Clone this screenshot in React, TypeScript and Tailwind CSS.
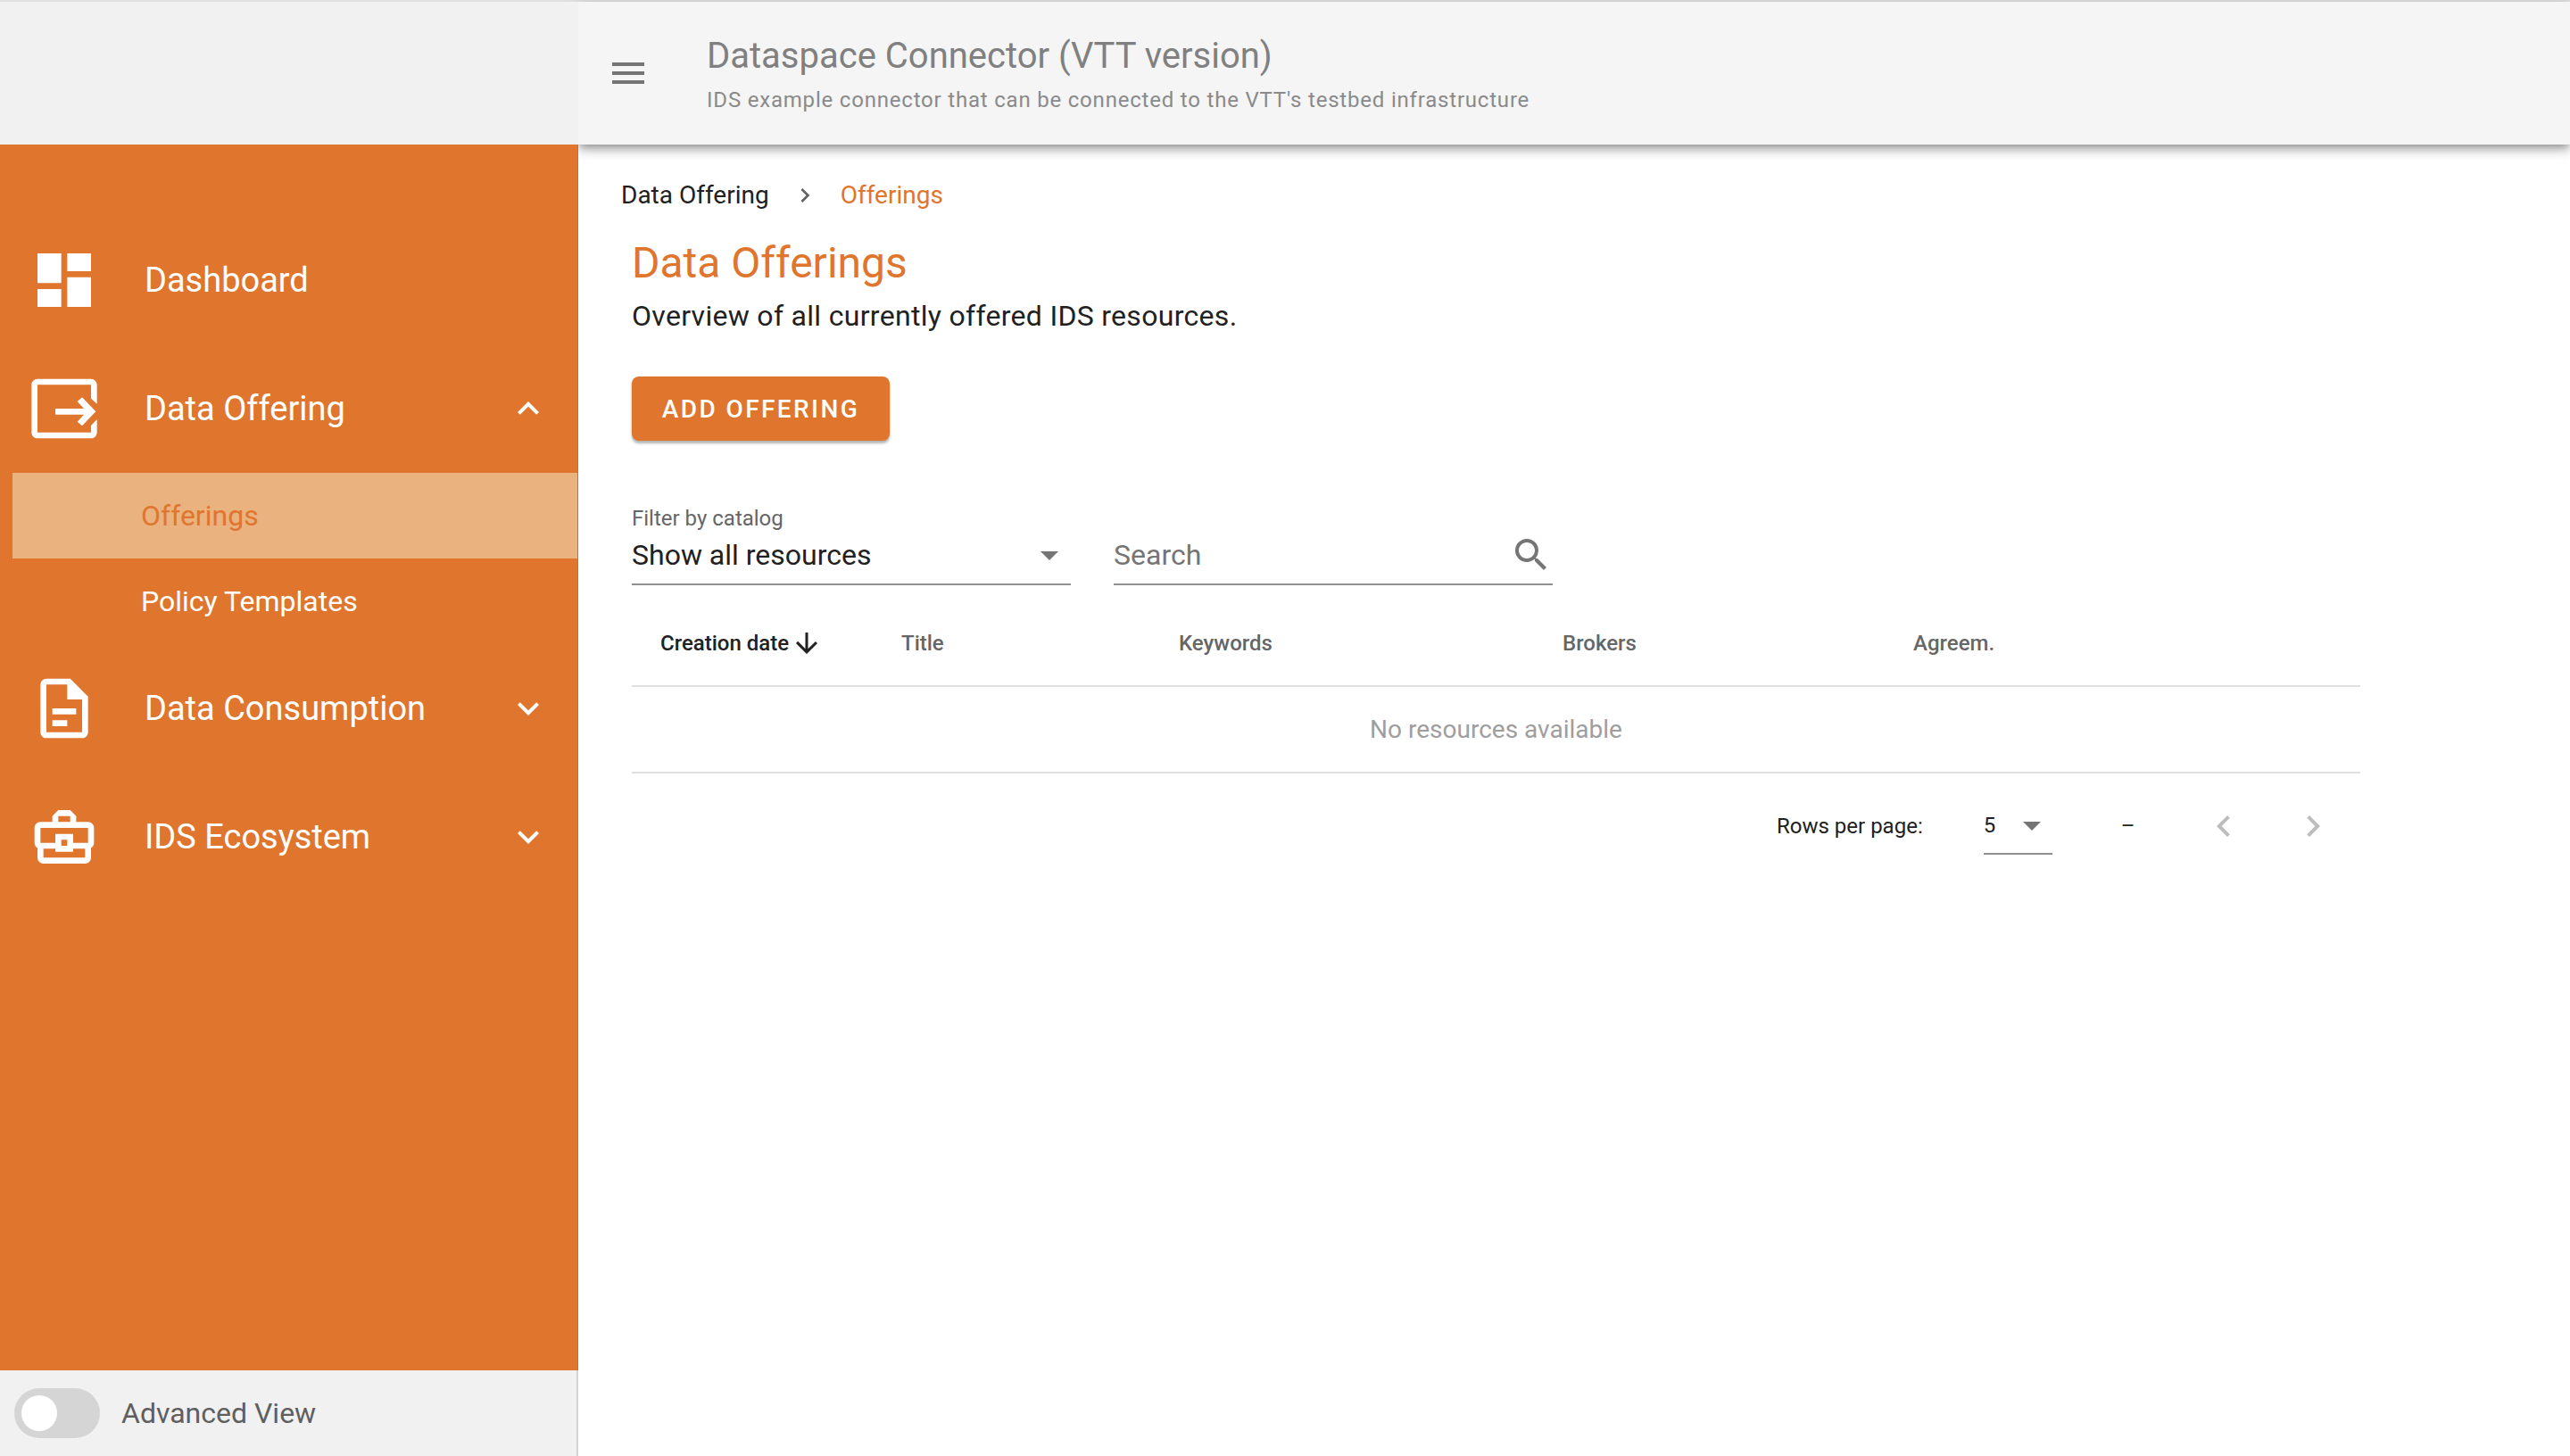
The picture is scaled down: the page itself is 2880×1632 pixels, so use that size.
import React from "react";
import {
  MdArrowDownward,
  MdArrowDropDown,
  MdChevronLeft,
  MdChevronRight,
  MdDashboard,
  MdExpandLess,
  MdExpandMore,
  MdMenu,
  MdOutlineBusinessCenter,
  MdSearch,
} from "react-icons/md";

const OfferingIcon = ({ className }: { className?: string }) => (
  <svg viewBox="0 0 24 24" fill="currentColor" className={className}>
    <path d="M21 2H3C1.9 2 1 2.9 1 4v16c0 1.1.9 2 2 2h18c1.1 0 2-.9 2-2v-4.4l-2 2.1V20H3V4h18v4.6l2 1.8V4c0-1.1-.9-2-2-2z" />
    <path d="M9 12h9.6l-2.2-2.4L18 8.2l4.6 4.8-4.6 4.8-1.6-1.4 2.2-2.4H9z" />
  </svg>
);

const ConsumptionIcon = ({ className }: { className?: string }) => (
  <svg viewBox="0 0 24 24" fill="currentColor" className={className}>
    <path d="M8 12h8v2H8zm0 4h5v2H8zm6-14H6c-1.1 0-2 .9-2 2v16c0 1.1.89 2 1.99 2H18c1.1 0 2-.9 2-2V8l-6-6zm4 18H6V4h7v5h5v11z" />
  </svg>
);

const NavItem = ({
  icon,
  label,
  chevron,
}: {
  icon: React.ReactNode;
  label: string;
  chevron?: "up" | "down";
}) => (
  <div className="flex h-[144px] items-center pl-[32px] pr-[31px] text-white">
    <div className="flex w-[80px] shrink-0 items-center justify-center">{icon}</div>
    <span className="ml-[50px] flex-1 text-[38px] font-normal leading-none">{label}</span>
    {chevron === "up" && <MdExpandLess className="h-[48px] w-[48px]" />}
    {chevron === "down" && <MdExpandMore className="h-[48px] w-[48px]" />}
  </div>
);

const Sidebar = () => (
  <aside className="relative z-20 flex w-[648px] shrink-0 flex-col">
    <nav className="flex-1 border-r border-[#cf6c2b] bg-[#e0752e] pt-[80px]">
      <NavItem icon={<MdDashboard className="h-[80px] w-[80px]" />} label="Dashboard" />
      <NavItem icon={<OfferingIcon className="h-[80px] w-[80px]" />} label="Data Offering" chevron="up" />
      <div className="ml-[14px] flex h-[96px] items-center bg-[#e9b27f] pl-[144px] text-[32px] leading-none text-[#e0752e]">
        Offerings
      </div>
      <div className="ml-[14px] flex h-[96px] items-center pl-[144px] text-[32px] leading-none text-white">
        Policy Templates
      </div>
      <NavItem icon={<ConsumptionIcon className="h-[80px] w-[80px]" />} label="Data Consumption" chevron="down" />
      <NavItem icon={<MdOutlineBusinessCenter className="h-[80px] w-[80px]" />} label="IDS Ecosystem" chevron="down" />
    </nav>
    <div className="flex h-[96px] items-center border-r-2 border-[#d4d4d4] bg-[#f1f1f1] pl-[16px]">
      <div className="flex h-[56px] w-[96px] items-center rounded-full bg-[#d5d5d5] pl-[8px]">
        <div className="h-[40px] w-[40px] rounded-full bg-white" />
      </div>
      <span className="ml-[24px] text-[32px] leading-none text-[#5f5f5f]">Advanced View</span>
    </div>
  </aside>
);

const columns = ["Title", "Keywords", "Brokers", "Agreem."];

const OfferingsTable = () => (
  <div className="mt-[17px] w-[1937px]">
    <div className="grid h-[97px] grid-cols-[302px_311px_430px_393px_1fr] items-center border-b-2 border-[#e0e0e0] text-[24px] font-medium leading-none">
      <div className="flex items-center pl-[32px] text-[#212121]">
        Creation date
        <MdArrowDownward className="ml-[2px] h-[36px] w-[36px]" />
      </div>
      {columns.map((c) => (
        <div key={c} className="text-[#666666]">
          {c}
        </div>
      ))}
    </div>
    <div className="flex h-[97px] items-center justify-center border-b-2 border-[#e0e0e0] text-[28px] leading-none text-[#9e9e9e]">
      No resources available
    </div>
    <div className="flex h-[118px] items-center text-[24px] leading-none text-[#212121]">
      <span className="ml-[1283px]">Rows per page:</span>
      <div className="relative ml-[68px] flex h-[64px] w-[77px] items-center border-b-2 border-[#8f8f8f]">
        5
        <MdArrowDropDown className="absolute right-[-1px] h-[48px] w-[48px] text-[#757575]" />
      </div>
      <span className="ml-[77px]">–</span>
      <MdChevronLeft className="ml-[76px] h-[48px] w-[48px] text-[#bdbdbd]" />
      <MdChevronRight className="ml-[52px] h-[48px] w-[48px] text-[#bdbdbd]" />
    </div>
  </div>
);

const App = () => {
  return (
    <div className="flex h-[1632px] w-[2880px] flex-col overflow-hidden bg-white font-['Roboto',sans-serif]">
      <div className="h-[2px] shrink-0 bg-[#e0e0e0]" />
      <header className="flex h-[160px] shrink-0">
        <div className="relative z-20 w-[648px] shrink-0 bg-[#f1f1f1]" />
        <div className="relative z-10 flex flex-1 items-center bg-[#f5f5f5] pl-[32px] shadow-[0_4px_8px_-2px_rgba(0,0,0,0.3),0_8px_10px_rgba(0,0,0,0.14),0_2px_20px_rgba(0,0,0,0.12)]">
          <MdMenu className="h-[48px] w-[48px] text-[#757575]" />
          <div className="ml-[64px] pt-[2px]">
            <div className="text-[40px] leading-[48px] text-[#808080]">Dataspace Connector (VTT version)</div>
            <div className="mt-[9px] text-[24px] leading-[32px] tracking-[0.8px] text-[#8a8a8a]">
              IDS example connector that can be connected to the VTT's testbed infrastructure
            </div>
          </div>
        </div>
      </header>
      <div className="flex min-h-0 flex-1">
        <Sidebar />
        <main className="flex-1">
          <div className="mt-[33px] flex h-[48px] items-center pl-[48px] text-[28px] leading-none">
            <span className="text-[#212121]">Data Offering</span>
            <MdChevronRight className="ml-[24px] h-[32px] w-[32px] text-[#616161]" />
            <span className="ml-[24px] text-[#e0752e]">Offerings</span>
          </div>
          <div className="pl-[60px]">
            <h1 className="mt-[24px] text-[48px] font-normal leading-[56px] text-[#e0752e]">Data Offerings</h1>
            <p className="mt-[9px] text-[32px] leading-[44px] tracking-[0.3px] text-[#212121]">
              Overview of all currently offered IDS resources.
            </p>
            <button className="mt-[46px] flex h-[72px] w-[289px] items-center justify-center rounded-[8px] bg-[#e0752e] pt-[1px] text-[28px] font-medium leading-none tracking-[2.4px] text-white shadow-[0_3px_3px_rgba(0,0,0,0.3)]">
              ADD OFFERING
            </button>
            <div className="mt-[72px] flex gap-[48px]">
              <div className="w-[492px] border-b-2 border-[#8f8f8f]">
                <div className="-mt-[1px] h-[33px] text-[24px] leading-[32px] text-[#666666]">Filter by catalog</div>
                <div className="mt-[6px] flex h-[50px] items-start justify-between text-[32px] leading-[36px] text-[#212121]">
                  Show all resources
                  <MdArrowDropDown className="h-[48px] w-[48px] -translate-y-[6px] text-[#757575]" />
                </div>
              </div>
              <div className="w-[492px] border-b-2 border-[#8f8f8f]">
                <div className="h-[32px]" />
                <div className="mt-[6px] flex h-[50px] items-start justify-between text-[32px] leading-[36px] text-[#757575]">
                  Search
                  <MdSearch className="h-[48px] w-[48px] -translate-y-[6px]" />
                </div>
              </div>
            </div>
            <OfferingsTable />
          </div>
        </main>
      </div>
    </div>
  );
};

export default App;
